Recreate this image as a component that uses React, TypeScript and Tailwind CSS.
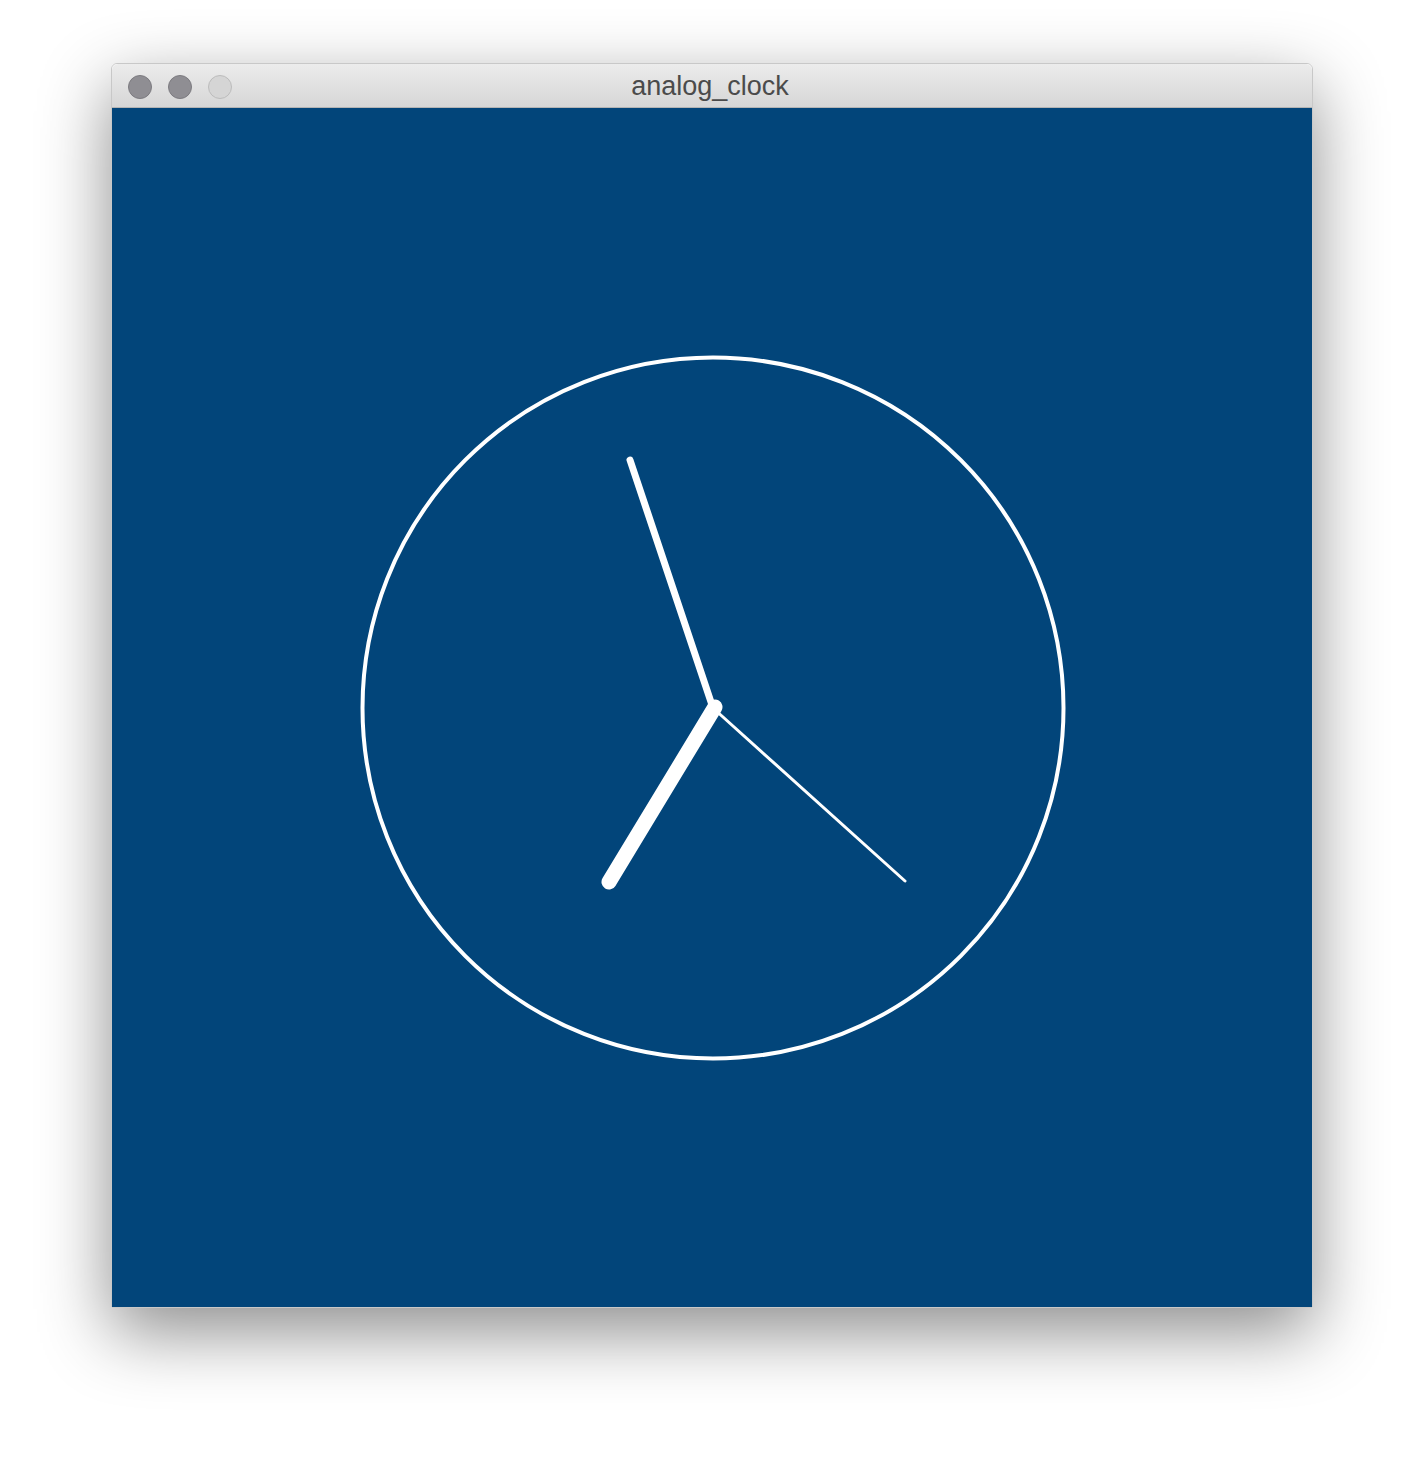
export default function App() {
  return (
    <div className="w-[1424px] h-[1468px] bg-white pt-[63px] pl-[111px]">
      <div className="w-[1202px] flex flex-col rounded-t-[6px] shadow-[0_24px_70px_rgba(0,0,0,0.45)] border border-[#c8c8c8]">
        <div className="relative h-[44px] flex items-center justify-center rounded-t-[6px] bg-gradient-to-b from-[#ececec] to-[#d6d6d6] border-b border-[#b4b4b4]">
          <div className="absolute left-[16px] top-[11px] flex gap-[16px]">
            <div className="w-[24px] h-[24px] rounded-full bg-[#8f8e93] border border-[#7c7b80]" />
            <div className="w-[24px] h-[24px] rounded-full bg-[#8f8e93] border border-[#7c7b80]" />
            <div className="w-[24px] h-[24px] rounded-full bg-[#d5d5d5] border border-[#bcbcbc]" />
          </div>
          <span className="text-[27px] text-[#4b4b4b] font-['Liberation_Sans',sans-serif] leading-none pt-[2px] pr-[4px]">analog_clock</span>
        </div>
        <div className="h-[1199px] bg-[#02457a]">
          <svg width="1200" height="1199" viewBox="0 0 1200 1199">
            <circle cx="601" cy="600" r="350.5" fill="none" stroke="white" strokeWidth="4" />
            <line x1="601" y1="600" x2="518" y2="352" stroke="white" strokeWidth="7" strokeLinecap="round" />
            <line x1="603" y1="599" x2="497" y2="774" stroke="white" strokeWidth="15" strokeLinecap="round" />
            <line x1="601" y1="600" x2="793" y2="773" stroke="white" strokeWidth="3" strokeLinecap="round" />
          </svg>
        </div>
      </div>
    </div>
  );
}
